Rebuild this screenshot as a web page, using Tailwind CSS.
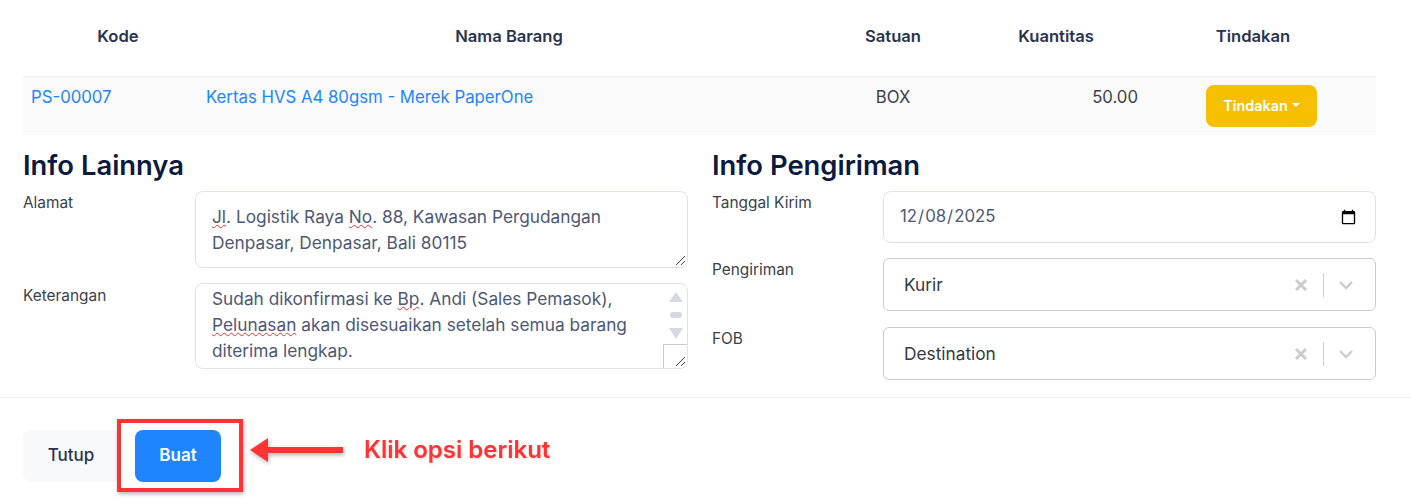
<!DOCTYPE html>
<html lang="id">
<head>
<meta charset="utf-8">
<script src="https://cdn.jsdelivr.net/npm/@tailwindcss/browser@4"></script>
<title>Info</title>
</head>
<body class="bg-white font-['Inter',sans-serif] overflow-hidden">
<div class="relative w-[1411px] h-[504px]">
  <div class="pl-[23px] pr-[35px]">
    <div class="grid grid-cols-[175px_622px_146px_180px_230px] h-[77px] items-center pb-[4px] border-b border-[#eff1f4] text-[16.6px] font-semibold text-[#2a3350] text-center">
      <div class="pl-[15px]">Kode</div>
      <div>Nama Barang</div>
      <div>Satuan</div>
      <div>Kuantitas</div>
      <div class="pr-[16px]">Tindakan</div>
    </div>
    <div class="grid grid-cols-[175px_622px_146px_180px_230px] h-[58px] bg-[#fafafa] text-[16.75px] text-[#3a3f4b] items-start">
      <div class="pl-2 pt-[8px] text-[#1e85ff]">PS-00007</div>
      <div class="pl-2 pt-[8px] text-[#1e85ff]">Kertas HVS A4 80gsm - Merek PaperOne</div>
      <div class="pt-[8px] text-center">BOX</div>
      <div class="pt-[8px] pr-2 text-right">50.00</div>
      <div class="pt-2 pl-[60px]">
        <button class="w-[111px] h-[42px] rounded-[8px] bg-[#f6c000] text-white text-[14.4px] font-semibold flex items-center justify-center gap-[4px]">Tindakan<span class="w-0 h-0 border-x-[4px] border-x-transparent border-t-[4px] border-t-white mb-[2px]"></span></button>
      </div>
    </div>
    <div class="grid grid-cols-[665px_664px] gap-x-[24px] pt-[13px]">
      <div>
        <h2 class="text-[27.4px] leading-[34px] font-semibold text-[#0c1a3e] mb-[9px]">Info Lainnya</h2>
        <div class="flex mb-[15px]">
          <label class="w-[172px] text-[15.4px] leading-[20px] text-[#3a3f4b] pt-[2px]">Alamat</label>
          <div class="relative flex-1 h-[77px] border border-[#dfe2ee] rounded-[8px] px-4 pt-[12px] text-[17.3px] leading-[26px] text-[#4d5876]">
            <span class="underline decoration-wavy decoration-[#e5342f] decoration-[1.4px]">Jl</span>. Logistik Raya <span class="underline decoration-wavy decoration-[#e5342f] decoration-[1.4px]">No</span>. 88, Kawasan Pergudangan<br>Denpasar, Denpasar, Bali 80115
            <svg class="absolute right-0 bottom-0" width="14" height="14" viewBox="0 0 14 14" fill="none" stroke="#444" stroke-width="1"><path d="M3 12 12 3M8 12 12 8"/></svg>
          </div>
        </div>
        <div class="flex">
          <label class="w-[172px] text-[15.4px] leading-[20px] text-[#3a3f4b] pt-[3px]">Keterangan</label>
          <div class="relative flex-1 h-[86px] border border-[#dfe2ee] rounded-[8px] px-4 pt-[2px] text-[17.3px] leading-[26px] text-[#4d5876] overflow-hidden">
            Sudah dikonfirmasi ke <span class="underline decoration-wavy decoration-[#e5342f] decoration-[1.4px]">Bp</span>. Andi (Sales Pemasok),<br><span class="underline decoration-wavy decoration-[#e5342f] decoration-[1.4px]">Pelunasan</span> akan disesuaikan setelah semua barang<br>diterima lengkap.
            <svg class="absolute right-[3px] top-[7px]" width="16" height="58" viewBox="0 0 16 58" fill="#d5d9e3"><path d="M8 1 15 11H1Z"/><rect x="2" y="21" width="12" height="6" rx="3"/><path d="M1 37H15L8 48Z"/></svg>
            <div class="absolute right-0 bottom-0 w-[24px] h-[24px] border-l border-t border-[#c9ccd3] bg-white">
              <svg class="absolute right-0 bottom-0" width="14" height="14" viewBox="0 0 14 14" fill="none" stroke="#444" stroke-width="1"><path d="M3 12 12 3M8 12 12 8"/></svg>
            </div>
          </div>
        </div>
      </div>
      <div>
        <h2 class="text-[27.4px] leading-[34px] font-semibold text-[#0c1a3e] mb-[9px]">Info Pengiriman</h2>
        <div class="flex mb-[15px]">
          <label class="w-[171px] text-[15.4px] leading-[20px] text-[#3a3f4b] pt-[2px]">Tanggal Kirim</label>
          <input type="date" value="2025-12-08" class="flex-1 h-[52px] border border-[#dfe2ee] rounded-[8px] pl-[15px] pr-[16px] text-[16.8px] text-[#4d5876]">
        </div>
        <div class="flex mb-[16px]">
          <label class="w-[171px] text-[15.4px] leading-[20px] text-[#3a3f4b] pt-[2px]">Pengiriman</label>
          <div class="flex-1 h-[53px] border border-[#ccccd0] rounded-[6px] pl-5 pr-[21px] flex items-center text-[17.3px] text-[#333a44]">
            <span class="flex-1">Kurir</span>
            <svg width="14" height="14" viewBox="0 0 14 14" stroke="#cccccc" stroke-width="3" fill="none"><path d="M2 2 12 12M12 2 2 12"/></svg>
            <span class="w-px h-[24px] bg-[#cccccc] ml-[15px] mr-[14px]"></span>
            <svg width="16" height="10" viewBox="0 0 16 10" stroke="#cccccc" stroke-width="2.4" fill="none"><path d="M2 2 8 8 14 2"/></svg>
          </div>
        </div>
        <div class="flex">
          <label class="w-[171px] text-[15.4px] leading-[20px] text-[#3a3f4b] pt-[2px]">FOB</label>
          <div class="flex-1 h-[53px] border border-[#ccccd0] rounded-[6px] pl-5 pr-[21px] flex items-center text-[17.3px] text-[#333a44]">
            <span class="flex-1">Destination</span>
            <svg width="14" height="14" viewBox="0 0 14 14" stroke="#cccccc" stroke-width="3" fill="none"><path d="M2 2 12 12M12 2 2 12"/></svg>
            <span class="w-px h-[24px] bg-[#cccccc] ml-[15px] mr-[14px]"></span>
            <svg width="16" height="10" viewBox="0 0 16 10" stroke="#cccccc" stroke-width="2.4" fill="none"><path d="M2 2 8 8 14 2"/></svg>
          </div>
        </div>
      </div>
    </div>
  </div>
  <div class="mt-[17px] border-t border-[#eff1f4] px-[23px] pt-[32px] flex gap-[16px]">
    <button class="w-[96px] h-[52px] rounded-[8px] bg-[#f8f9fa] text-[17px] font-medium text-[#2a3350]">Tutup</button>
    <button class="w-[86px] h-[52px] rounded-[8px] bg-[#1e85ff] text-[17px] font-semibold text-white">Buat</button>
  </div>
  <div class="absolute left-[117px] top-[419px] w-[126px] h-[73px] border-[4px] border-[#ff3333] shadow-[1px_2px_4px_rgba(0,0,0,0.3)]"></div>
  <svg class="absolute left-[248px] top-[434px]" width="100" height="34" viewBox="0 0 100 34">
    <path d="M2 16 20 4V13H95V19H20V28Z" fill="#ff3333" style="filter:drop-shadow(1px 2px 2px rgba(0,0,0,.3))"/>
  </svg>
  <div class="absolute left-[364px] top-[434px] text-[24px] leading-[32px] font-semibold text-[#ff3333] drop-shadow-[1px_1px_1px_rgba(0,0,0,0.15)]">Klik opsi berikut</div>
</div>
</body>
</html>
